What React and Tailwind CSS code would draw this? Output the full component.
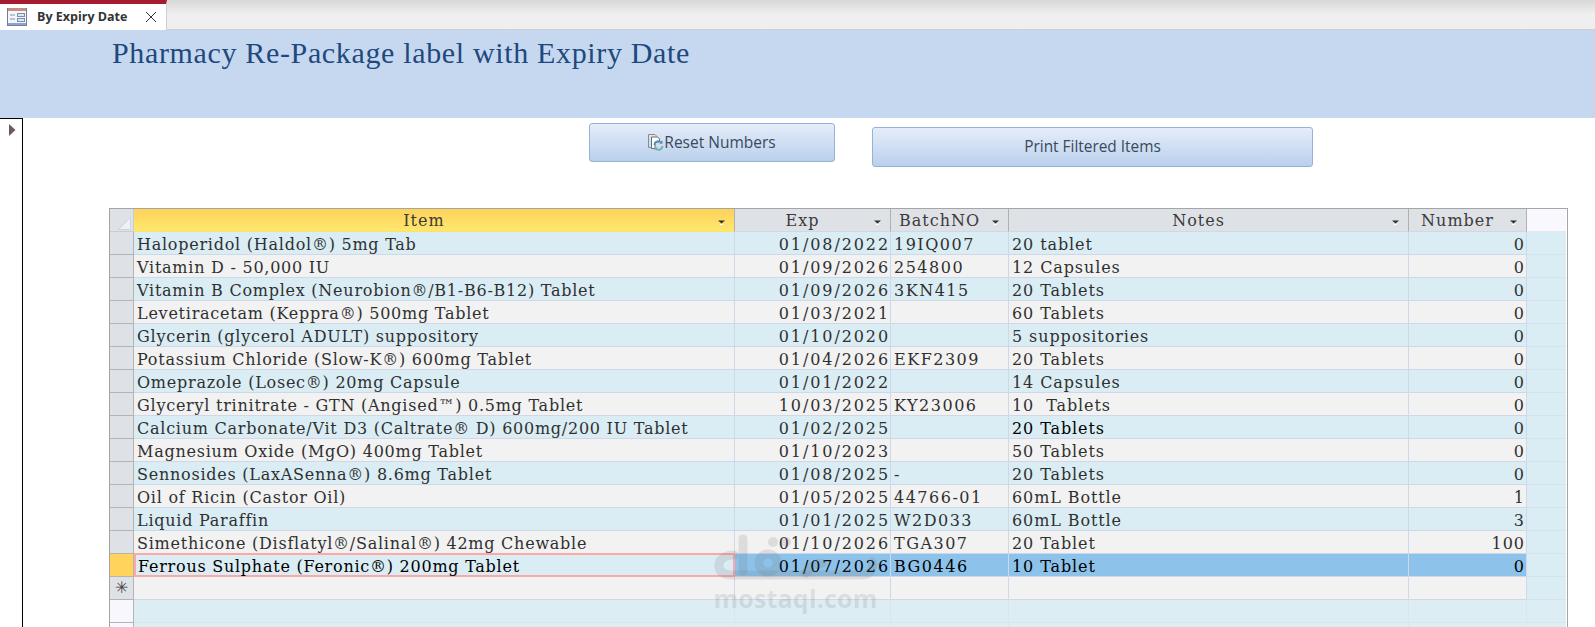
const rows = [
  ["Haloperidol (Haldol®) 5mg Tab", "01/08/2022", "19IQ007", "20 tablet", "0"],
  ["Vitamin D - 50,000 IU", "01/09/2026", "254800", "12 Capsules", "0"],
  ["Vitamin B Complex (Neurobion®/B1-B6-B12) Tablet", "01/09/2026", "3KN415", "20 Tablets", "0"],
  ["Levetiracetam (Keppra®) 500mg Tablet", "01/03/2021", "", "60 Tablets", "0"],
  ["Glycerin (glycerol ADULT) suppository", "01/10/2020", "", "5 suppositories", "0"],
  ["Potassium Chloride (Slow-K®) 600mg Tablet", "01/04/2026", "EKF2309", "20 Tablets", "0"],
  ["Omeprazole (Losec®) 20mg Capsule", "01/01/2022", "", "14 Capsules", "0"],
  ["Glyceryl trinitrate - GTN (Angised™) 0.5mg Tablet", "10/03/2025", "KY23006", "10  Tablets", "0"],
  ["Calcium Carbonate/Vit D3 (Caltrate® D) 600mg/200 IU Tablet", "01/02/2025", "", "20 Tablets", "0"],
  ["Magnesium Oxide (MgO) 400mg Tablet", "01/10/2023", "", "50 Tablets", "0"],
  ["Sennosides (LaxASenna®) 8.6mg Tablet", "01/08/2025", "-", "20 Tablets", "0"],
  ["Oil of Ricin (Castor Oil)", "01/05/2025", "44766-01", "60mL Bottle", "1"],
  ["Liquid Paraffin", "01/01/2025", "W2D033", "60mL Bottle", "3"],
  ["Simethicone (Disflatyl®/Salinal®) 42mg Chewable", "01/10/2026", "TGA307", "20 Tablet", "100"],
  ["Ferrous Sulphate (Feronic®) 200mg Tablet", "01/07/2026", "BG0446", "10 Tablet", "0"],
];

const cols = "grid grid-cols-[24px_601px_156px_118px_400px_118px_39px]";
const cell = "border-r border-b border-[#d0d7e5] truncate whitespace-pre leading-[26px] h-[23px]";

function HeaderCell({ label, active }) {
  return (
    <div
      className={`relative h-[23px] border-r border-b border-[#b1b1b1] text-center pr-[20px] leading-[24px] tracking-[1px] text-[#3b3b3b] ${
        active ? "bg-gradient-to-b from-[#fdd25a] to-[#fee76e] border-b-[#ffe06a]" : "bg-[#dee1e6] border-b-[#d0d7e5]"
      }`}
    >
      <span>{label}</span>
      <svg className="absolute right-[9px] top-[11px]" width="7" height="5" viewBox="0 0 7 5">
        <path d="M0 0.5h7L3.5 3.5z" fill="#2d2d2d" />
        <path d="M2 4.5h3" stroke="#ffffff" strokeWidth="1" />
      </svg>
    </div>
  );
}

function Row({ r, i }) {
  const bg = i % 2 === 0 ? "bg-[#daedf4]" : "bg-[#f2f2f2]";
  return (
    <div className={cols}>
      <div className="h-[23px] bg-[#dee1e6] border-r border-b border-[#b4b4b4]" />
      <div className={`${cell} ${bg} pl-[3px] tracking-[0.75px] text-[#303030]`}>{r[0]}</div>
      <div className={`${cell} ${bg} text-right tracking-[1.9px] text-[#303030]`}>{r[1]}</div>
      <div className={`${cell} ${bg} pl-[3px] tracking-[1.5px] text-[#303030]`}>{r[2]}</div>
      <div className={`${cell} ${bg} pl-[3px] tracking-[0.9px] ${i === 8 ? "text-black" : "text-[#303030]"}`}>{r[3]}</div>
      <div className={`${cell} ${bg} text-right pr-[1px] tracking-[1px] text-[#303030]`}>{r[4]}</div>
      <div className="h-[23px] bg-[#daedf4] border-b border-[#d6e3ee]" />
    </div>
  );
}

function SelectedRow({ r }) {
  const blue = "bg-[#8dc3ea] border-r border-b border-[#d0d7e5] h-[23px] leading-[26px] text-black truncate";
  return (
    <div className={cols}>
      <div className="h-[23px] bg-[#ffd35c] border-r border-b border-[#b4b4b4]" />
      <div className="h-[24px] -mt-px bg-[#daedf4] border-2 border-[#ffa6a6] pl-[2px] leading-[23px] tracking-[0.75px] text-black">{r[0]}</div>
      <div className={`${blue} text-right tracking-[1.9px]`}>{r[1]}</div>
      <div className={`${blue} pl-[3px] tracking-[1.5px]`}>{r[2]}</div>
      <div className={`${blue} pl-[3px] tracking-[0.9px]`}>{r[3]}</div>
      <div className={`${blue} text-right pr-[1px] tracking-[1px]`}>{r[4]}</div>
      <div className="h-[23px] bg-[#daedf4] border-b border-[#d6e3ee]" />
    </div>
  );
}

function EmptyRow() {
  const c = "h-[23px] bg-[#dcedf4] border-r border-b border-[#dbe5f0]";
  return (
    <div className={cols}>
      <div className="h-[23px] bg-[#f7f7fd] border-r border-b border-[#b4b4b4]" />
      <div className={c} />
      <div className={c} />
      <div className={c} />
      <div className={c} />
      <div className={c} />
      <div className="h-[23px] bg-[#dcedf4] border-b border-[#dbe5f0]" />
    </div>
  );
}

function FormIcon() {
  return (
    <svg width="20" height="20" viewBox="0 0 20 20" className="ml-[7px] shrink-0">
      <rect x="0.5" y="1.5" width="19" height="17" fill="#f4f6fb" stroke="#6f7fa0" />
      <rect x="1" y="1" width="18" height="3" fill="#c5917f" />
      <rect x="1" y="16" width="18" height="2" fill="#8fa3c7" />
      <path d="M3 8h5M3 12h5" stroke="#7f92b5" strokeWidth="1.2" />
      <rect x="10.5" y="6.5" width="7" height="3" fill="#dfe7f3" stroke="#7b8eb2" />
      <rect x="10.5" y="11.5" width="7" height="3" fill="#dfe7f3" stroke="#7b8eb2" />
    </svg>
  );
}

function ResetIcon() {
  return (
    <svg width="16" height="17" viewBox="0 0 16 17" className="shrink-0">
      <path d="M3.5 13.5H0.5V0.5H7L9 2.5" fill="none" stroke="#8c8c8c" />
      <path d="M3.5 3H9.5L11.5 5V8H7V14.5H3.5z" fill="#ffffff" stroke="#6e6e6e" />
      <path d="M6.5 11a4 4 0 0 1 7-2.4" fill="none" stroke="#4a93b8" strokeWidth="1.8" />
      <path d="M14.5 6.5v3.2h-3.2z" fill="#4a93b8" />
      <path d="M14.5 12a4 4 0 0 1-7 2.4" fill="none" stroke="#6fb0a8" strokeWidth="1.8" />
      <path d="M6.5 16.5v-3.2h3.2z" fill="#6fb0a8" />
    </svg>
  );
}

function Watermark() {
  return (
    <div className="absolute left-[708px] top-[533px] w-[175px] h-[82px] pointer-events-none">
      <svg width="175" height="52" viewBox="0 0 175 52" className="block">
        <g fill="none" stroke="#6e6e6e" strokeOpacity="0.17" strokeWidth="9" strokeLinecap="round" strokeLinejoin="round">
          <path d="M26 22C15 22 10 28 11 34C12 40 17 42 25 42H152C162 42 166 37 164 29" />
          <path d="M35 6V38" />
          <circle cx="60" cy="30" r="9" />
          <path d="M98 40C102 34 106 30 114 30" />
        </g>
        <circle cx="65" cy="9" r="5" fill="#6e6e6e" fillOpacity="0.17" />
        <circle cx="78" cy="9" r="5" fill="#6e6e6e" fillOpacity="0.17" />
      </svg>
      <div className="text-center text-[25px] leading-[26px] font-bold text-[#6e6e6e]/[0.17] font-['Open_Sans',sans-serif] tracking-[0.2px]">
        mostaql.com
      </div>
    </div>
  );
}

export default function App() {
  return (
    <div className="relative w-[1595px] h-[627px] overflow-hidden bg-white">
      {/* tab strip */}
      <div className="h-[30px] flex bg-gradient-to-b from-[#d8d8d8] via-[#efefef] to-[#efefef] border-b border-[#cfcfcf]">
        <div className="w-[167px] h-[30px] bg-white border-t-4 border-[#a51c30] border-r border-r-[#cfcfcf] flex items-center">
          <FormIcon />
          <span className="ml-[10px] text-[12.5px] font-bold text-[#333] font-['Open_Sans',sans-serif] whitespace-nowrap">By Expiry Date</span>
          <svg width="12" height="12" viewBox="0 0 12 12" className="ml-[18px]">
            <path d="M1 1l10 10M11 1L1 11" stroke="#333" strokeWidth="1" />
          </svg>
        </div>
      </div>

      {/* banner */}
      <div className="h-[88px] bg-[#c6d8f0] pl-[112px] pt-[6px]">
        <div className="text-[30px] leading-[33px] text-[#1f497d] font-['Liberation_Serif',serif] tracking-[0.65px] whitespace-nowrap">
          Pharmacy Re-Package label with Expiry Date
        </div>
      </div>

      {/* body */}
      <div className="flex h-[509px]">
        <div className="w-[23px] shrink-0 border-t border-r border-black pl-[9px] pt-[5px]">
          <svg width="7" height="12" viewBox="0 0 7 12" className="block">
            <path d="M0 0l6.5 6L0 12z" fill="#6b5a5f" />
          </svg>
        </div>
        <div className="flex-1">
          <div className="h-[90px] flex items-start">
            <div className="ml-[566px] mt-[5px] w-[246px] h-[39px] rounded-[3px] border border-[#95b3d7] bg-gradient-to-b from-[#e6edfa] to-[#b9d0ec] flex items-center justify-center text-[15.5px] text-[#3a4a5c] font-['Open_Sans',sans-serif]">
              <ResetIcon />
              <span>Reset Numbers</span>
            </div>
            <div className="ml-[37px] mt-[9px] w-[441px] h-[40px] rounded-[3px] border border-[#95b3d7] bg-gradient-to-b from-[#e6edfa] to-[#b9d0ec] flex items-center justify-center text-[15.4px] text-[#3a4a5c] font-['Open_Sans',sans-serif]">
              Print Filtered Items
            </div>
          </div>

          {/* datasheet */}
          <div className="ml-[86px] w-[1459px] border-t border-l border-r border-[#a5a5a5] font-['DejaVu_Serif',serif] text-[16px]">
            <div className={cols}>
              <div className="relative h-[23px] bg-[#dee1e6] border-r border-b border-[#c8ccd4]">
                <svg className="absolute left-[8px] top-[8px]" width="13" height="13" viewBox="0 0 13 13">
                  <path d="M12.5 0.5V12.5H0.5z" fill="#eef1f6" stroke="#c9d6e8" />
                </svg>
              </div>
              <HeaderCell label="Item" active />
              <HeaderCell label="Exp" />
              <HeaderCell label="BatchNO" />
              <HeaderCell label="Notes" />
              <HeaderCell label="Number" />
              <div className="h-[23px] bg-[#f8f8fe] border-b border-[#e4e6f0]" />
            </div>
            {rows.slice(0, 14).map((r, i) => (
              <Row key={i} r={r} i={i} />
            ))}
            <SelectedRow r={rows[14]} />
            <div className={cols}>
              <div className="h-[23px] bg-[#dee1e6] border-r border-b border-[#b4b4b4] flex items-center justify-center text-[16px] leading-none text-[#444]">✳</div>
              <div className={`${cell} bg-[#f2f2f2]`} />
              <div className={`${cell} bg-[#f2f2f2]`} />
              <div className={`${cell} bg-[#f2f2f2]`} />
              <div className={`${cell} bg-[#f2f2f2]`} />
              <div className={`${cell} bg-[#f2f2f2]`} />
              <div className="h-[23px] bg-[#daedf4] border-b border-[#d6e3ee]" />
            </div>
            <EmptyRow />
            <EmptyRow />
          </div>
        </div>
      </div>
      <Watermark />
    </div>
  );
}
